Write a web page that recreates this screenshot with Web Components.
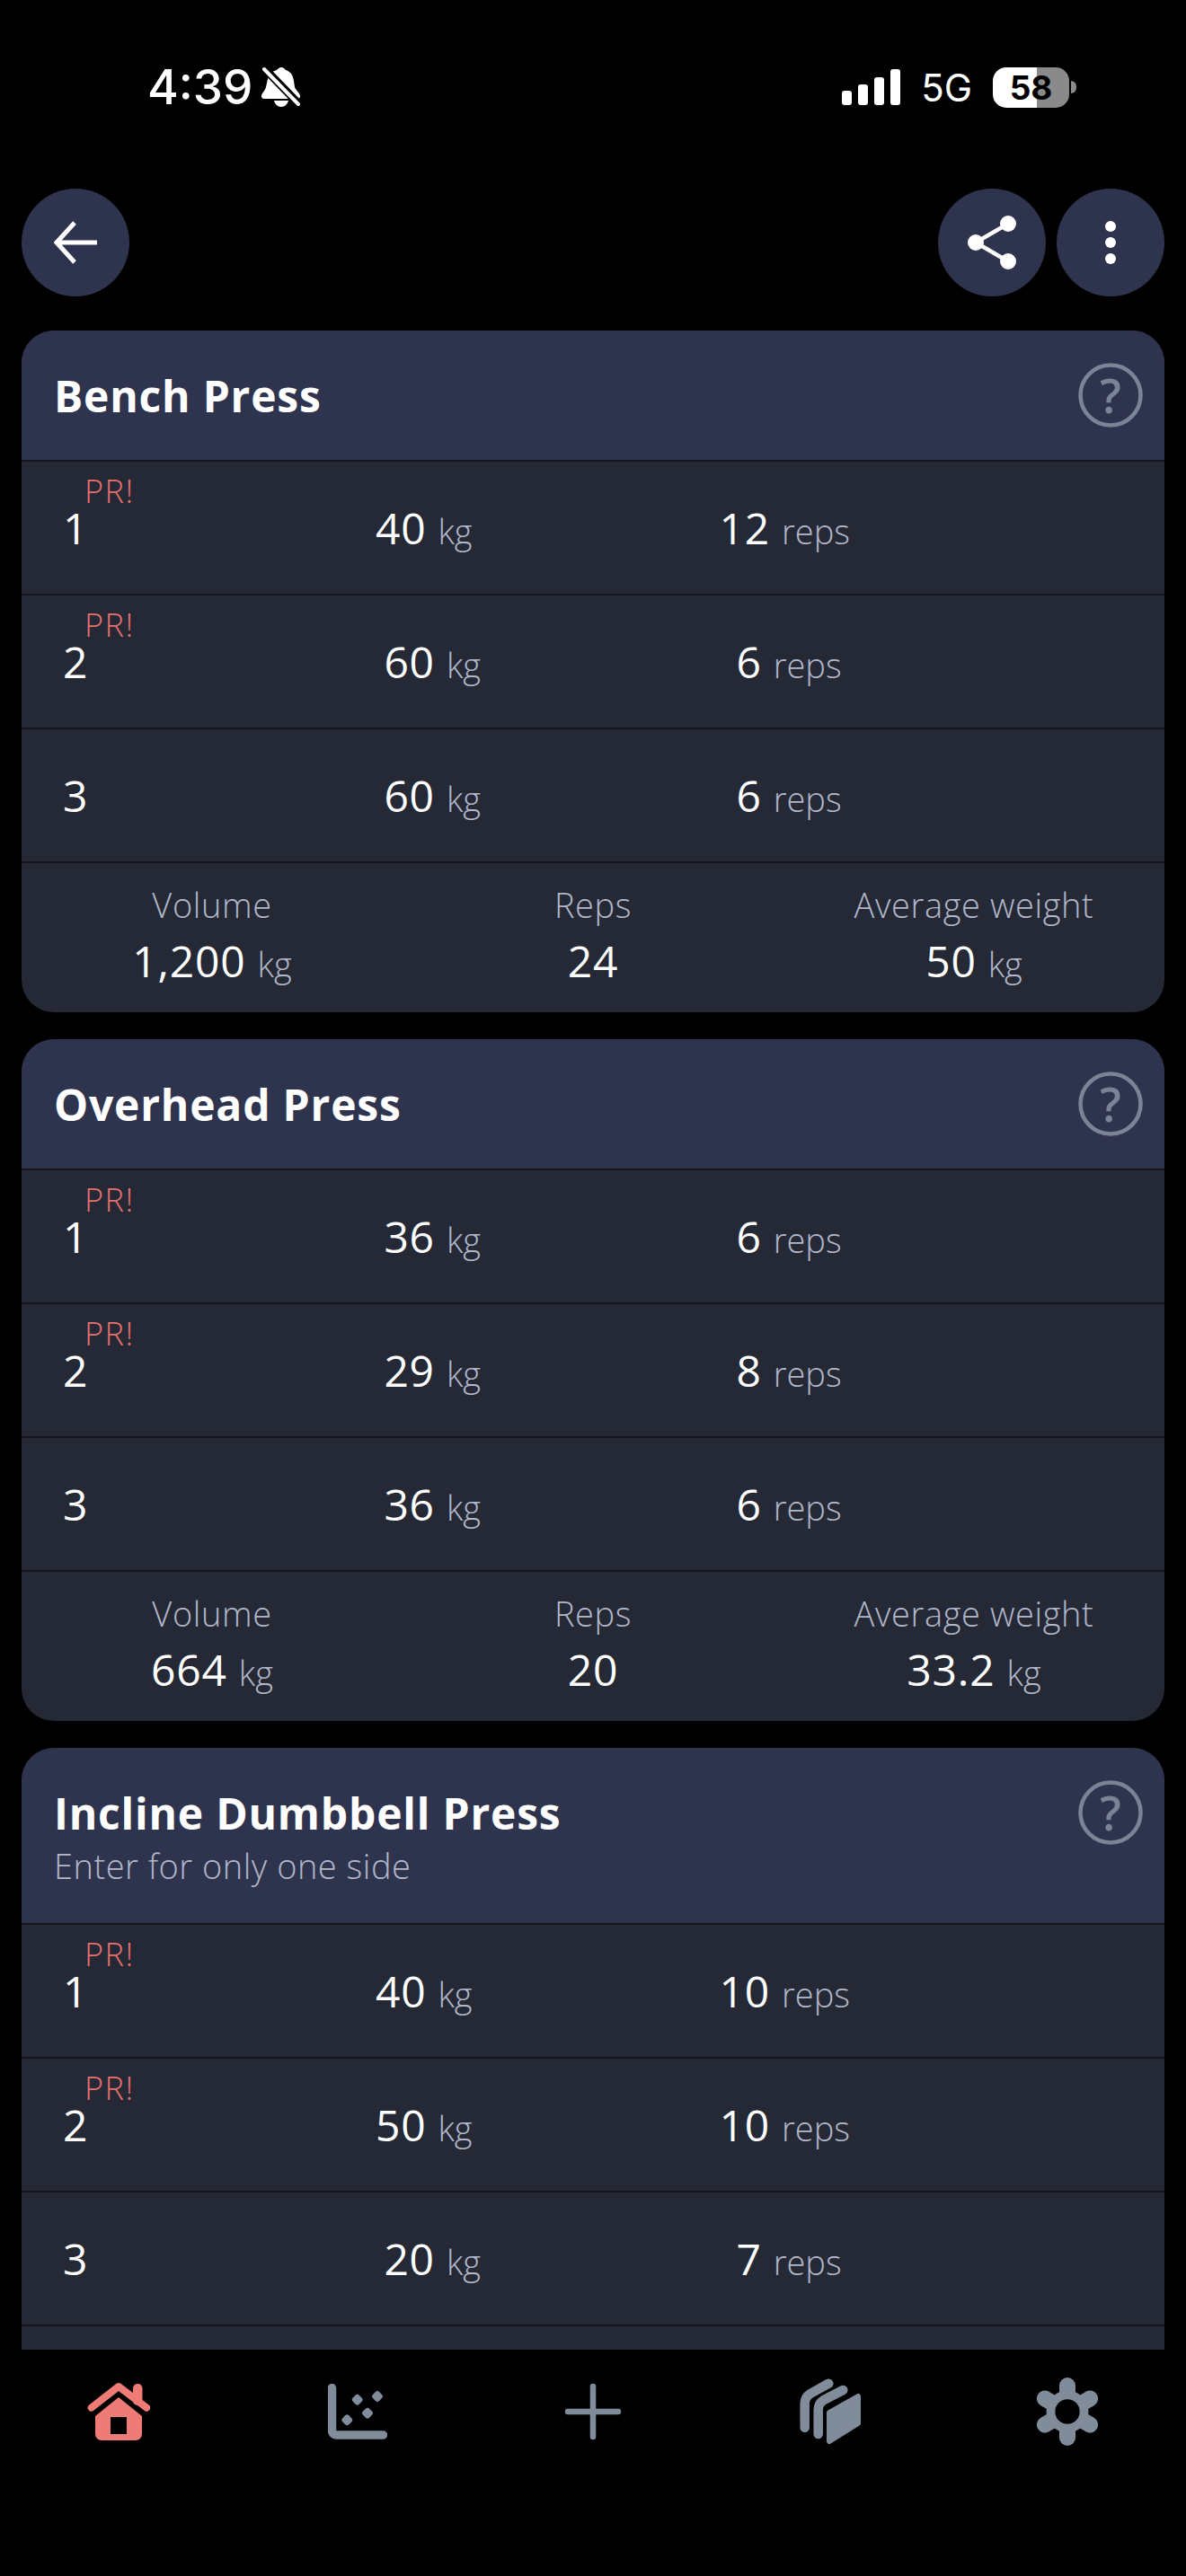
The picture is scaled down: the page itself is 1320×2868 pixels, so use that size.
<!DOCTYPE html>
<html><head><meta charset="utf-8"><style>
html,body{margin:0;background:#000;height:100%;overflow:hidden}
</style></head><body>
<workout-app></workout-app>
<script>
const G='#818c9b';
const gearArms=[0,60,120,180,240,300].map(a=>`<line x1="36" y1="38" x2="36" y2="9" transform="rotate(${a} 36 38)" stroke="${G}" stroke-width="18" stroke-linecap="round"/>`).join('');
const ICON={
back:'<svg width="48" height="48" viewBox="0 0 48 48"><path d="M23 2 3 24l20 22M3 24h45" fill="none" stroke="#fff" stroke-width="5"/></svg>',
share:'<svg width="56" height="60" viewBox="0 0 56 60"><path d="M46 9 10 30l36 21" fill="none" stroke="#fff" stroke-width="4.500"/><circle cx="46" cy="9" r="9" fill="#fff"/><circle cx="10" cy="30" r="9" fill="#fff"/><circle cx="46" cy="51" r="9" fill="#fff"/></svg>',
more:'<svg width="12" height="50" viewBox="0 0 12 50"><circle cx="6" cy="7" r="6" fill="#fff"/><circle cx="6" cy="25" r="6" fill="#fff"/><circle cx="6" cy="43" r="6" fill="#fff"/></svg>',
home:'<svg width="70" height="66" viewBox="0 0 70 66"><path fill="#ef7b77" fill-rule="evenodd" d="M35 17 61 38V58a7 7 0 0 1-7 7H16a7 7 0 0 1-7-7V38ZM26 39V58H44V39Z"/><rect x="51" y="2" width="10.500" height="24" rx="5" fill="#ef7b77"/><path d="M4.700 28.700 35 5 66.300 28.700" fill="none" stroke="#ef7b77" stroke-width="8" stroke-linecap="round" stroke-linejoin="round"/></svg>',
chart:'<svg class="chart" width="66" height="62" viewBox="0 0 66 62"><path d="M4.500 4.500V52a5 5 0 0 0 5 5h52" fill="none" stroke="'+G+'" stroke-width="9.500" stroke-linecap="round"/><g fill="'+G+'"><rect x="27.700" y="12.700" width="10" height="10" rx="3" transform="rotate(45 32.700 17.700)"/><rect x="50" y="9" width="10" height="10" rx="3" transform="rotate(45 55 14)"/><rect x="39" y="27.700" width="10" height="10" rx="3" transform="rotate(45 44 32.700)"/><rect x="16.300" y="35.300" width="10" height="10" rx="3" transform="rotate(45 21.300 40.300)"/></g></svg>',
plus:'<svg width="64" height="64" viewBox="0 0 64 64"><path d="M32 4v56M4 32h56" stroke="'+G+'" stroke-width="6.500" stroke-linecap="round"/></svg>',
cards:'<svg width="68" height="74" viewBox="0 0 68 74"><g fill="none" stroke="'+G+'" stroke-linecap="round" stroke-linejoin="round"><path d="M33 38 65 20V50L33 70Z" fill="'+G+'" stroke-width="6"/><path d="M48.300 13 27 24Q20.700 28 20.700 35V62" stroke-width="10.500"/><path d="M32.300 5.700 12 17Q5.700 21 5.700 28V54.700" stroke-width="10.500"/></g></svg>',
gear:'<svg width="72" height="76" viewBox="0 0 72 76"><circle cx="36" cy="38" r="23.500" fill="'+G+'"/>'+gearArms+'<circle cx="36" cy="38" r="13.700" fill="#000"/></svg>'
};
const FONT='"Open Sans",sans-serif';
class StatusBar extends HTMLElement{constructor(){super();this.attachShadow({mode:'open'}).innerHTML=`<style>
:host{display:flex;height:210px;box-sizing:border-box;padding:0 122px 0 164px;justify-content:space-between;color:#fff;font-family:Inter,sans-serif}
.l,.r{display:flex;align-items:center;height:194px}
.t{font-size:53px;font-weight:500}
.bell{margin-left:10px}
.five{font-size:42px;margin:0 23px 0 22px;font-weight:400}
.bat{width:85px;height:45px;border-radius:15px;background:linear-gradient(90deg,#fff 0 58%,#8a8a8a 58%);color:#000;font-size:37px;font-weight:700;text-align:center;line-height:45px}
.nub{width:6px;height:14px;background:#8a8a8a;border-radius:0 6px 6px 0;margin-left:2px}
</style><div class="l"><span class="t">4:39</span><svg class="bell" width="44" height="46" viewBox="0 0 44 46"><path fill="#fff" d="M22 1c3 0 4 2 5 3 6 2 8 6 9 12l1 7c1 3 6 7 6 10 0 2-1 3-3 3H3c-2 0-3-1-3-3 0-3 4-6 5-10l2-9c1-6 4-8 10-10 1-1 3-3 5-3ZM14 38h16c-1 4-4 7-8 7s-7-3-8-7Z"/><path d="M3 2 41 41" stroke="#000" stroke-width="9"/><path d="M3 3 41 42" stroke="#fff" stroke-width="4" stroke-linecap="round"/></svg></div>
<div class="r"><svg width="66" height="42" viewBox="0 0 66 42"><g fill="#fff"><rect x="0" y="25" width="11" height="16" rx="3"/><rect x="18" y="18" width="11" height="23" rx="3"/><rect x="36" y="10" width="11" height="31" rx="3"/><rect x="54" y="1" width="11" height="40" rx="3"/></g></svg><span class="five">5G</span><div class="bat">58</div><div class="nub"></div></div>`}}
customElements.define('status-bar',StatusBar);
class RoundButton extends HTMLElement{constructor(){super();this.attachShadow({mode:'open'}).innerHTML=`<style>:host{display:flex;width:120px;height:120px;border-radius:50%;background:#2f344e;align-items:center;justify-content:center}</style><slot></slot>`}}
customElements.define('round-button',RoundButton);
class TopNav extends HTMLElement{constructor(){super();this.attachShadow({mode:'open'}).innerHTML=`<style>:host{display:flex;justify-content:space-between;padding:0 24px;height:158px;box-sizing:border-box}.g{display:flex;gap:12px}</style>
<round-button>${ICON.back}</round-button><div class="g"><round-button>${ICON.share}</round-button><round-button>${ICON.more}</round-button></div>`}}
customElements.define('top-nav',TopNav);
class SetRow extends HTMLElement{constructor(){super();const n=this.getAttribute('n');this.attachShadow({mode:'open'}).innerHTML=`<style>
:host{display:flex;justify-content:space-between;align-items:center;height:147px;padding:0 46px;border-top:2px solid #14161e;background:#252936;font-family:${FONT};color:#fff;letter-spacing:.8px}
.s{width:73px;position:relative;font-size:48px;line-height:65px;font-weight:500}
.pr{position:absolute;left:24px;top:-30px;font-size:36px;line-height:44px;color:#e8716f;font-weight:300;letter-spacing:1.5px}
.v{font-size:48px;line-height:65px;white-space:nowrap;font-weight:500}
.u{font-size:38px;line-height:1;font-weight:300;color:#b2b7c9;margin-left:13px;letter-spacing:0}
.e{width:29px}
</style>`+(n?`<div class="s">${n}${this.hasAttribute('pr')?'<span class="pr">PR!</span>':''}</div>
<div class="v">${this.getAttribute('w')}<span class="u">kg</span></div><div class="v">${this.getAttribute('r')}<span class="u">reps</span></div><div class="e"></div>`:'')}}
customElements.define('set-row',SetRow);
class SummaryCell extends HTMLElement{constructor(){super();this.attachShadow({mode:'open'}).innerHTML=`<style>
:host{display:block;text-align:center;font-family:${FONT};color:#fff}
.l{font-size:38px;line-height:49px;font-weight:300;color:#b2b7c9;letter-spacing:.6px}
.v{font-size:48px;line-height:65px;margin-top:5px;letter-spacing:.8px;font-weight:500}
.u{font-size:38px;line-height:1;font-weight:300;color:#b2b7c9;margin-left:13px;letter-spacing:0}
</style><div class="l">${this.getAttribute('label')}</div><div class="v">${this.getAttribute('value')}${this.hasAttribute('unit')?`<span class="u">${this.getAttribute('unit')}</span>`:''}</div>`}}
customElements.define('summary-cell',SummaryCell);
class ExerciseCard extends HTMLElement{constructor(){super();const sub=this.getAttribute('sub');this.attachShadow({mode:'open'}).innerHTML=`<style>
:host{display:block;border-radius:36px;overflow:hidden;background:#252936;font-family:${FONT};flex:none}
header{display:flex;justify-content:space-between;background:#2f344e;padding:37px 24px 0 36px;box-sizing:border-box;height:${sub?195:144}px;color:#fff}
h2{margin:0;font-size:48px;line-height:72px;font-weight:700;letter-spacing:.8px}
p{margin:-2px 0 0;font-size:38px;line-height:49px;font-weight:300;color:#b2b7c9;letter-spacing:.5px}
.q{flex:none;margin-top:-1.5px}
.sum{display:grid;grid-template-columns:repeat(3,1fr);height:168px;box-sizing:border-box;border-top:2px solid #14161e;padding-top:22px}
</style><header><div><h2>${this.getAttribute('name')}</h2>${sub?`<p>${sub}</p>`:''}</div>
<svg class="q" width="72" height="72" viewBox="0 0 72 72"><circle cx="36" cy="36" r="33.500" fill="none" stroke="#7b8397" stroke-width="4.500"/><text x="36" y="55.500" text-anchor="middle" font-family="Open Sans" font-weight="600" font-size="52" fill="#7b8397">?</text></svg></header>
<slot></slot>${this.hasAttribute('summary')?`<div class="sum"><slot name="sum"></slot></div>`:''}`}}
customElements.define('exercise-card',ExerciseCard);
class TabBar extends HTMLElement{constructor(){super();this.attachShadow({mode:'open'}).innerHTML=`<style>
:host{display:grid;grid-template-columns:repeat(5,1fr);height:252px;background:#000;box-sizing:border-box;padding-top:30px}
div{display:flex;justify-content:center;align-items:center;height:78px}
.chart{margin-left:4px}
</style><div>${ICON.home}</div><div>${ICON.chart}</div><div>${ICON.plus}</div><div>${ICON.cards}</div><div>${ICON.gear}</div>`}}
customElements.define('tab-bar',TabBar);
class WorkoutApp extends HTMLElement{constructor(){super();
const rows=(a)=>a.map((r,i)=>`<set-row n="${i+1}" w="${r[0]}" r="${r[1]}" ${r[2]?'pr':''}></set-row>`).join('');
const sum=(v,r,a)=>`<summary-cell slot="sum" label="Volume" value="${v}" unit="kg"></summary-cell><summary-cell slot="sum" label="Reps" value="${r}"></summary-cell><summary-cell slot="sum" label="Average weight" value="${a}" unit="kg"></summary-cell>`;
this.attachShadow({mode:'open'}).innerHTML=`<style>
:host{display:flex;flex-direction:column;height:2868px;width:1320px;background:#000;overflow:hidden}
main{flex:1;min-height:0;overflow:hidden;display:flex;flex-direction:column;gap:30px;padding:0 24px}
</style><status-bar></status-bar><top-nav></top-nav><main>
<exercise-card name="Bench Press" summary>${rows([[40,12,1],[60,6,1],[60,6,0]])}${sum('1,200',24,50)}</exercise-card>
<exercise-card name="Overhead Press" summary>${rows([[36,6,1],[29,8,1],[36,6,0]])}${sum('664',20,'33.2')}</exercise-card>
<exercise-card name="Incline Dumbbell Press" sub="Enter for only one side">${rows([[40,10,1],[50,10,1],[20,7,0]])}<set-row></set-row></exercise-card>
</main><tab-bar></tab-bar>`}}
customElements.define('workout-app',WorkoutApp);
</script></body></html>
